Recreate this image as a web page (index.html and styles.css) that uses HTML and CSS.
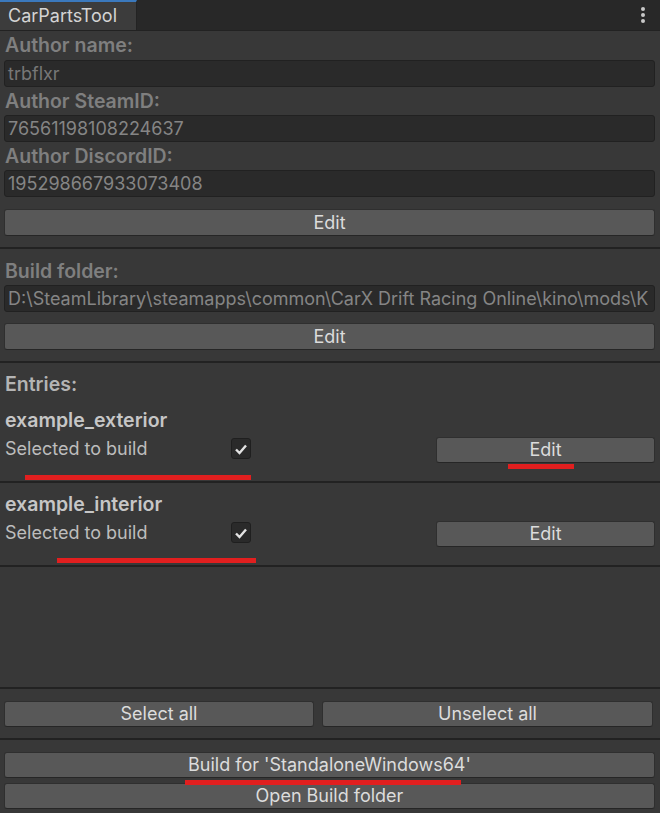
FILE: index.html
```html
<!DOCTYPE html>
<html>
<head>
<meta charset="utf-8">
<link rel="stylesheet" href="styles.css">
</head>
<body>
<div class="app">
  <div class="tabbar">
    <div class="tab">CarPartsTool</div>
    <div class="menu"><span></span><span></span><span></span></div>
  </div>
  <div class="panel">
    <section class="sec sec-author">
      <div class="label first">Author name:</div>
      <div class="field dim">trbflxr</div>
      <div class="label">Author SteamID:</div>
      <div class="field">76561198108224637</div>
      <div class="label">Author DiscordID:</div>
      <div class="field">195298667933073408</div>
      <div class="btn btn-gap">Edit</div>
    </section>
    <div class="sep"></div>
    <section class="sec sec-build">
      <div class="label build-label">Build folder:</div>
      <div class="field">D:\SteamLibrary\steamapps\common\CarX Drift Racing Online\kino\mods\K</div>
      <div class="btn btn-gap2">Edit</div>
    </section>
    <div class="sep"></div>
    <section class="sec sec-entry">
      <div class="label entries">Entries:</div>
      <div class="entry-name">example_exterior</div>
      <div class="entry-row">
        <div class="entry-label">Selected to build</div>
        <div class="check"><svg width="14" height="12" viewBox="0 0 14 12"><path d="M2 6.5 L5.5 10 L12 2.5" fill="none" stroke="#e4e4e4" stroke-width="2.4" stroke-linejoin="miter"/></svg></div>
        <div class="btn btn-entry">Edit</div>
      </div>
    </section>
    <div class="sep"></div>
    <section class="sec sec-entry2">
      <div class="entry-name">example_interior</div>
      <div class="entry-row">
        <div class="entry-label">Selected to build</div>
        <div class="check"><svg width="14" height="12" viewBox="0 0 14 12"><path d="M2 6.5 L5.5 10 L12 2.5" fill="none" stroke="#e4e4e4" stroke-width="2.4" stroke-linejoin="miter"/></svg></div>
        <div class="btn btn-entry">Edit</div>
      </div>
    </section>
    <div class="sep"></div>
    <div class="spacer"></div>
    <div class="sep"></div>
    <section class="sec sec-select">
      <div class="btn btn-select">Select all</div>
      <div class="btn btn-unselect">Unselect all</div>
    </section>
    <div class="sep"></div>
    <section class="sec sec-final">
      <div class="btn">Build for 'StandaloneWindows64'</div>
      <div class="btn btn-open">Open Build folder</div>
    </section>
  </div>
  <div class="mark mark1"></div>
  <div class="mark mark2"></div>
  <div class="mark mark3"></div>
  <div class="mark mark4"></div>
</div>
</body>
</html>
```
FILE: styles.css
```css
* { box-sizing: border-box; }
html, body { margin: 0; padding: 0; }
body {
  background: #383838;
  font-family: Inter, "Noto Sans", "Liberation Sans", sans-serif;
  font-size: 18px;
  color: #c4c4c4;
}
.app {
  position: relative;
  width: 660px;
  height: 813px;
  overflow: hidden;
  background: #383838;
}
.tabbar {
  height: 31px;
  background: #282828;
  border-bottom: 1px solid #222;
  display: flex;
  justify-content: space-between;
  align-items: flex-start;
}
.tab {
  width: 137px;
  height: 30px;
  background: #3c3c3c;
  border-top: 2px solid #3b79bd;
  border-right: 1px solid #232323;
  color: #d4d4d4;
  padding-left: 8px;
  line-height: 28px;
  font-size: 18px;
}
.menu {
  display: flex;
  flex-direction: column;
  gap: 2px;
  padding: 7px 15px 0 0;
}
.menu span {
  width: 4px;
  height: 4px;
  border-radius: 50%;
  background: #c8c8c8;
}
.panel {
  display: flex;
  flex-direction: column;
}
.sec {
  padding: 0 5px 0 4px;
  display: flex;
  flex-direction: column;
}
.label {
  height: 28px;
  line-height: 28px;
  font-size: 19.5px;
  font-weight: 600;
  color: #7f7f7f;
  padding-left: 1px;
}
.label.first { height: 29px; line-height: 29px; }
.field {
  height: 27px;
  line-height: 25px;
  background: #2a2a2a;
  border: 1px solid #212121;
  border-radius: 3px;
  padding-left: 3px;
  color: #858585;
  white-space: nowrap;
  overflow: hidden;
}
.field.dim { color: #777; }
.btn {
  height: 27px;
  line-height: 25px;
  background: #585858;
  border: 1px solid #2f2f2f;
  border-bottom-color: #262626;
  border-radius: 3px;
  text-align: center;
  color: #dcdcdc;
  white-space: nowrap;
}
.btn-gap { margin-top: 12px; margin-bottom: 11px; }
.sep {
  height: 2px;
  background: #222;
}
.build-label { margin-top: 8px; }
.btn-gap2 { margin-top: 11px; margin-bottom: 11px; }
.entries { margin-top: 7px; color: #b4b4b4; }
.entry-name {
  height: 28px;
  line-height: 28px;
  font-size: 19.5px;
  font-weight: 600;
  color: #c6c6c6;
  padding-left: 1px;
  margin-top: 8px;
}
.sec-entry2 .entry-name { margin-top: 7px; }
.entry-row {
  display: flex;
  align-items: center;
  height: 26px;
  margin-top: 3px;
  margin-bottom: 18px;
}
.entry-label {
  flex: 0 0 227px;
  padding-left: 1px;
  color: #bdbdbd;
  margin-top: -3px;
}
.check {
  width: 20px;
  height: 21px;
  background: #2a2a2a;
  border: 1px solid #1f1f1f;
  border-radius: 3px;
  display: flex;
  align-items: center;
  justify-content: center;
  margin-top: -3px;
}
.btn-entry {
  width: 219px;
  height: 26px;
  line-height: 24px;
  margin-left: auto;
}
.spacer { height: 120px; }
.sec-select {
  flex-direction: row;
  gap: 8px;
  padding: 12px 7px 11px 4px;
}
.btn-select { width: 310px; height: 26px; line-height: 24px; }
.btn-unselect { flex: 1; height: 26px; line-height: 24px; }
.sec-final { padding-top: 12px; gap: 5px; }
.sec-final .btn { height: 26px; line-height: 24px; }
.mark {
  position: absolute;
  height: 5px;
  background: #e11f1f;
}
.mark1 { left: 25px; top: 475px; width: 226px; }
.mark2 { left: 508px; top: 464px; width: 66px; }
.mark3 { left: 57px; top: 558px; width: 199px; }
.mark4 { left: 185px; top: 780px; width: 276px; }
```
